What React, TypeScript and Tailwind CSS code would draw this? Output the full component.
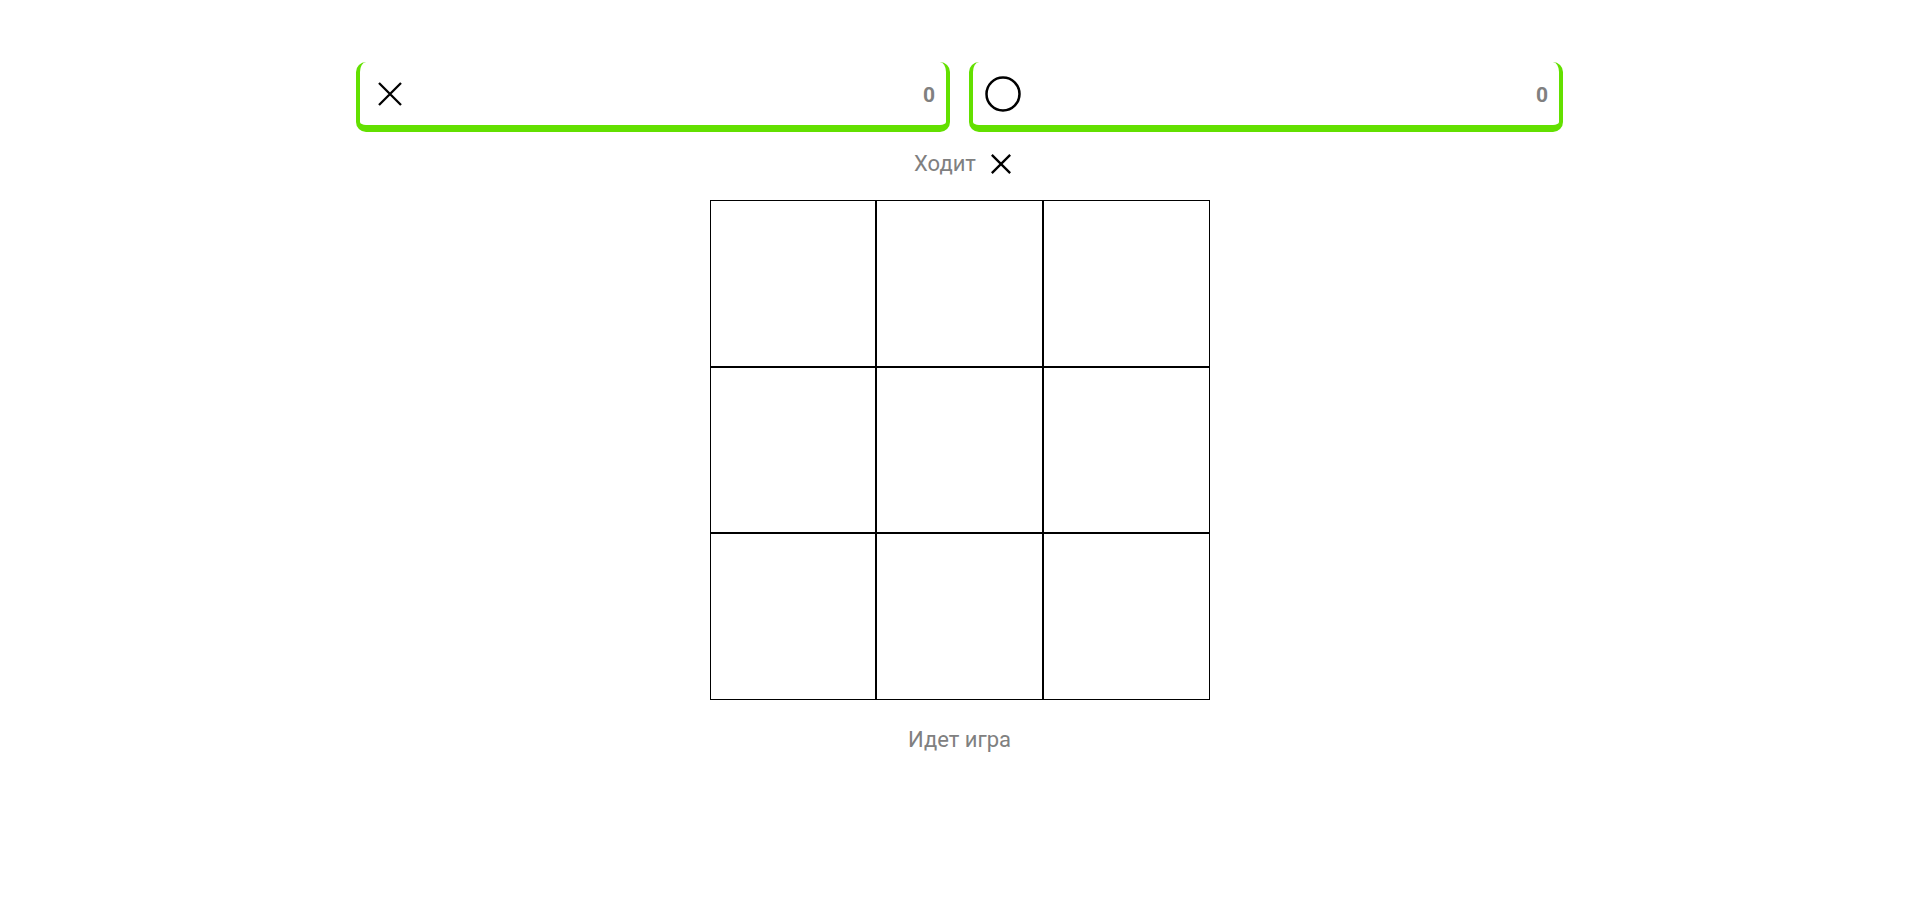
import React from "react";

function XIcon({ size, stroke = 2 }: { size: number; stroke?: number }) {
  return (
    <svg width={size} height={size} viewBox="0 0 24 24" fill="none">
      <path d="M1 1 L23 23 M23 1 L1 23" stroke="#000" strokeWidth={stroke} strokeLinecap="butt" />
    </svg>
  );
}

function OIcon({ size }: { size: number }) {
  return (
    <svg width={size} height={size} viewBox="0 0 36 36" fill="none">
      <circle cx="18" cy="18" r="16.5" stroke="#000" strokeWidth="2.5" />
    </svg>
  );
}

function Card({ children, score }: { children: React.ReactNode; score: number }) {
  return (
    <div className="flex-1 h-[70px] flex items-center justify-between pl-[12px] pr-[11px] border-l-4 border-r-4 border-b-[7px] border-t-0 border-[#63e000] rounded-[10px] bg-white">
      <div className="w-[36px] h-[36px] flex items-center justify-center">{children}</div>
      <span className="text-[21px] font-bold text-[#808080] leading-none pt-[3px]">{score}</span>
    </div>
  );
}

export default function App() {
  const cells = Array.from({ length: 9 });
  return (
    <div className="min-h-[901px] w-full bg-white flex flex-col items-center pt-[62px]" style={{ fontFamily: "Roboto, 'Liberation Sans', sans-serif" }}>
      <div className="w-[1207px] flex gap-[19px]">
        <Card score={0}>
          <XIcon size={24} stroke={2.3} />
        </Card>
        <Card score={0}>
          <OIcon size={36} />
        </Card>
      </div>
      <div className="mt-[17px] h-[30px] flex items-center gap-[15px] pl-[6px]">
        <span className="text-[22px] text-[#808080] leading-[30px]">Ходит</span>
        <XIcon size={20} stroke={2.8} />
      </div>
      <div className="mt-[21px] w-[500px] h-[500px] grid grid-cols-3 grid-rows-3">
        {cells.map((_, i) => (
          <div key={i} className="border border-black" />
        ))}
      </div>
      <div className="mt-[25px] text-[22px] leading-[30px] text-[#808080]">Идет игра</div>
    </div>
  );
}
